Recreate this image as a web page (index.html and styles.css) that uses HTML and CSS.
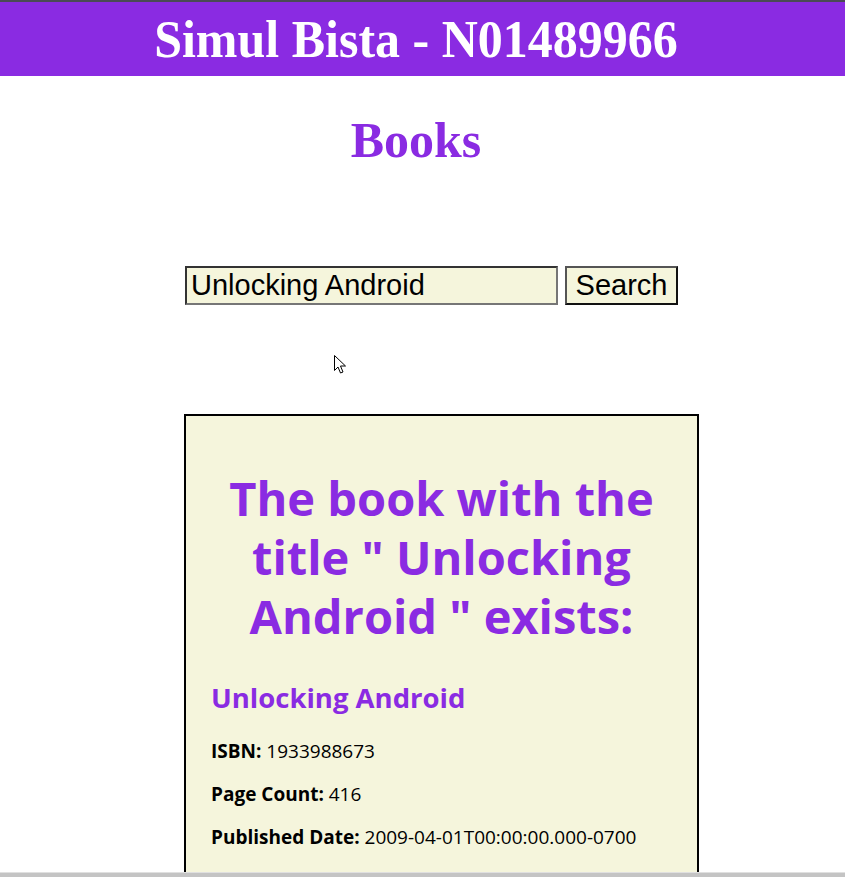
FILE: index.html
```html
<!DOCTYPE html>
<html lang="en">
<head>
<meta charset="utf-8">
<title>Books</title>
<link rel="stylesheet" href="styles.css">
</head>
<body>
<header class="site-header">
  <h1 class="site-title">Simul Bista - N01489966</h1>
</header>
<main class="page">
  <h2 class="page-title">Books</h2>
  <form class="search-form">
    <input class="search-input" type="text" value="Unlocking Android">
    <button class="search-button" type="button">Search</button>
  </form>
  <section class="result-card">
    <h3 class="result-heading">The book with the title " Unlocking Android " exists:</h3>
    <h4 class="book-title">Unlocking Android</h4>
    <p class="book-field"><strong>ISBN:</strong> 1933988673</p>
    <p class="book-field"><strong>Page Count:</strong> 416</p>
    <p class="book-field"><strong>Published Date:</strong> 2009-04-01T00:00:00.000-0700</p>
  </section>
</main>
<svg class="cursor" width="14" height="22" viewBox="0 0 14 22" aria-hidden="true">
  <path d="M1.5 1.5 L1.5 16.5 L5 13 L7.5 19 L10 18 L7.5 12 L12.5 12 Z" fill="#fff" stroke="#000" stroke-width="1" stroke-linejoin="miter"/>
</svg>
<div class="window-edge"></div>
</body>
</html>
```
FILE: styles.css
```css
html, body {
  margin: 0;
  padding: 0;
  background: #ffffff;
}
body {
  font-family: "Liberation Serif", "Times New Roman", serif;
  height: 877px;
  overflow: hidden;
  position: relative;
}
.site-header {
  background: #8a2be2;
  border-top: 2px solid #4a4a55;
  height: 74px;
  padding-right: 13px;
  display: flex;
  align-items: center;
  justify-content: center;
}
.site-title {
  margin: 0;
  color: #ffffff;
  font-size: 50px;
  font-weight: bold;
  line-height: 1;
  transform: scaleY(1.06);
}
.page {
  width: 832px;
}
.page-title {
  margin: 36px 0 0;
  text-align: center;
  color: #8a2be2;
  font-size: 50px;
  font-weight: bold;
  line-height: 56px;
}
.search-form {
  display: flex;
  gap: 7px;
  margin: 98px 0 0 185px;
}
.search-input {
  box-sizing: border-box;
  width: 373px;
  height: 39px;
  margin: 0;
  padding: 0 4px;
  background: #f5f5dc;
  border: 2px solid;
  border-color: #333333 #767676 #767676 #333333;
  font-family: "Liberation Sans", Arial, sans-serif;
  font-size: 29px;
  color: #000;
}
.search-button {
  box-sizing: border-box;
  width: 113px;
  height: 39px;
  margin: 0;
  padding: 0;
  background: #f5f5dc;
  border: 2px solid;
  border-color: #555555 #111111 #111111 #555555;
  font-family: "Liberation Sans", Arial, sans-serif;
  font-size: 29px;
  color: #000;
}
.result-card {
  box-sizing: border-box;
  width: 515px;
  margin: 109px 0 0 184px;
  padding: 53px 25px 26px;
  background: #f5f5dc;
  border: 2px solid #000;
  border-bottom: 0;
  font-family: "Open Sans", Lato, sans-serif;
}
.result-heading {
  margin: 0;
  text-align: center;
  color: #8a2be2;
  font-size: 47px;
  font-weight: bold;
  line-height: 59px;
}
.book-title {
  margin: 35px 0 0;
  color: #8a2be2;
  font-size: 27.5px;
  font-weight: bold;
  line-height: 34px;
}
.book-field {
  margin: 25px 0 0;
  font-size: 19px;
  line-height: 23px;
  color: #000;
}
.book-field + .book-field {
  margin-top: 20px;
}
.book-field strong {
  font-weight: bold;
}
.cursor {
  position: absolute;
  left: 333px;
  top: 354px;
}
.window-edge {
  position: fixed;
  left: 0;
  right: 0;
  bottom: 0;
  height: 4px;
  background: #c4c4c4;
  border-top: 1px solid #e0e0e0;
}
```
